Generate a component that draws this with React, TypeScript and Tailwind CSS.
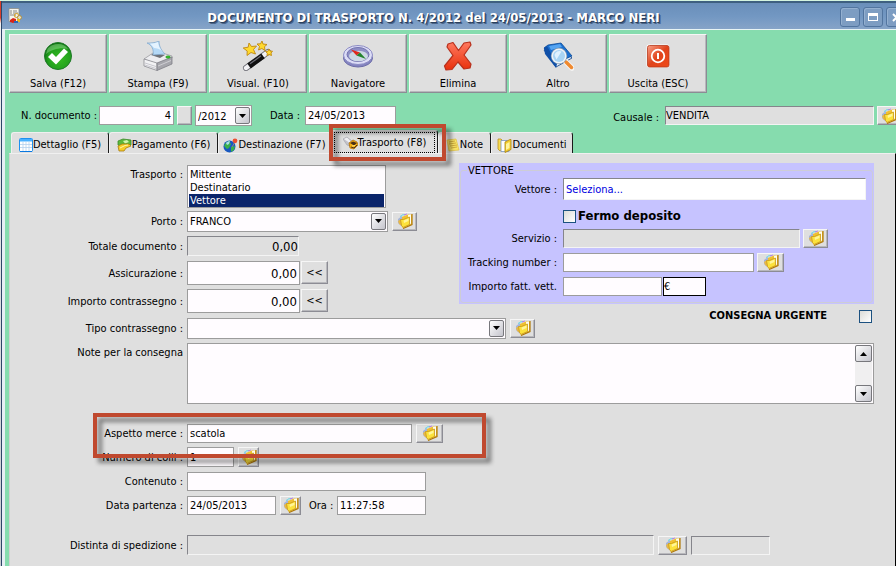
import React, { useId } from "react";

/* ---------- toolbar drawings ---------- */

function SaveIcon() {
  return (
    <svg width="30" height="30" viewBox="0 0 30 30" aria-hidden="true">
      <defs>
        <radialGradient id="saveG" cx="55%" cy="60%" r="60%">
          <stop offset="0" stopColor="#35bb22" />
          <stop offset="0.7" stopColor="#23a01e" />
          <stop offset="1" stopColor="#0b6a10" />
        </radialGradient>
      </defs>
      <circle cx="15" cy="15" r="13.500" fill="url(#saveG)" stroke="#1f7a28" />
      <path d="M3 13a12 11 0 0 1 22-5c-6-2-16 0-22 5z" fill="#8fdc8c" opacity=".5" />
      <path d="M5 16l4-4 4 4 8-8.500 4 3.500-12 12.500z" fill="#fff" />
    </svg>
  );
}

function PrintIcon() {
  return (
    <svg width="32" height="30" viewBox="0 0 32 30" aria-hidden="true">
      <path d="M2 18l9-6 6-1 13 4v2l-15 6z" fill="#ededf0" stroke="#9a9aa0" strokeWidth=".8" />
      <path d="M2 18l13 4v7.500L2 25z" fill="#f2f2f4" stroke="#8a8a90" strokeWidth=".8" />
      <path d="M30 16v7l-15 6.500V22z" fill="#a6a6ac" stroke="#7f7f86" strokeWidth=".8" />
      <path d="M3 22l11 3.500M3 24l11 3.500" stroke="#bcbcc4" strokeWidth=".8" />
      <path d="M16 25l13-5.500" stroke="#d8d8dc" strokeWidth=".8" />
      <path d="M9 14l3-2 11 2-5 3z" fill="#6e7076" />
      <path d="M5 2c4 0 8 0 12-2 0 6 3 10 6 13l-12 1c1-5-1-10-6-12z" fill="#b4d8f6" stroke="#7fa6cc" strokeWidth=".7" />
      <path d="M8 2.500c3 0 5-.5 8-1.500.500 4 2 7 4 9-2-2-6-3-8-3z" fill="#e4f3ff" />
      <ellipse cx="26" cy="16" rx="2.300" ry="1.200" fill="#35c42c" stroke="#2a8a24" strokeWidth=".5" />
    </svg>
  );
}

function WandIcon() {
  return (
    <svg width="32" height="30" viewBox="0 0 32 30" aria-hidden="true">
      <path d="M4 27L26 11" stroke="#6a6a72" strokeWidth="6" strokeLinecap="round" />
      <path d="M4 27L26 11" stroke="#f2f2f5" strokeWidth="4.400" strokeLinecap="round" />
      <path d="M7 25L21 14.800" stroke="#101010" strokeWidth="6" />
      <path d="M8 22.800L19 14.800" stroke="#70707a" strokeWidth="1.200" />
      <g fill="#ffd92e" stroke="#c08810" strokeWidth=".9" strokeLinejoin="round">
        <path d="M7 2l2.500 3.500 5-.5-3 3.500 2 4.500-4.500-1.500-4 3 .2-4.500-4-3 5-.8z" />
        <path d="M20 0l1 3 4 .5-2.500 2.200.5 3.800-3.200-2-3.300 1.500 1-3.500-2.500-2.500 3.500-.2z" />
        <path d="M27 8l1 2 2.500.200-1.500 1.800.5 2.500-2.500-1-2 1.200.3-2.500-1.800-1.700 2.500-.3z" />
      </g>
    </svg>
  );
}

function CompassIcon() {
  return (
    <svg width="32" height="30" viewBox="0 0 32 30" aria-hidden="true">
      <ellipse cx="16" cy="17" rx="14.500" ry="9" fill="#8484c0" stroke="#6c6ca8" />
      <ellipse cx="16" cy="14" rx="14.500" ry="9.500" fill="#dcdcf6" stroke="#8c8cc4" />
      <ellipse cx="16" cy="13.500" rx="11" ry="7" fill="#8f8fc6" stroke="#7474b0" />
      <ellipse cx="16.500" cy="15" rx="9.500" ry="5.200" fill="#ccd8e4" />
      <path d="M9 8.500l9 3-3.500 3z" fill="#e0281c" />
      <path d="M24 18l-9.500-3.500 3.500-3z" fill="#23822d" />
    </svg>
  );
}

function DeleteIcon() {
  return (
    <svg width="30" height="30" viewBox="0 0 30 30" aria-hidden="true">
      <defs>
        <linearGradient id="delG" x1="0" y1="0" x2="0" y2="1">
          <stop offset="0" stopColor="#ff7a60" />
          <stop offset="1" stopColor="#e8300c" />
        </linearGradient>
      </defs>
      <path
        d="M5 3l5-1.500 5.500 8L21 2l6-1 1 3-7 10 7 9-1 4-6 1-6-7-6 7.500-6 .5-1.500-4L10 14.500 4 6z"
        fill="url(#delG)"
        stroke="#b8301c"
        strokeWidth="1.200"
        strokeLinejoin="round"
      />
    </svg>
  );
}

function BookIcon() {
  return (
    <svg width="32" height="30" viewBox="0 0 32 30" aria-hidden="true">
      <path d="M2 9L16 4l14 13-16 9z" fill="#e4ecf6" stroke="#0b3f86" strokeWidth=".8" />
      <path d="M2 7l4-3 13-2 11 13-16 7z" fill="#1a6fd0" stroke="#0b4a96" strokeWidth=".8" />
      <path d="M2 7l3-2 10 18-1 4L3 13z" fill="#1050a8" />
      <path d="M7 5l11-2 2 3-11 3z" fill="#55a4f0" />
      <path d="M24 21l6 6" stroke="#f4f4f4" strokeWidth="5.500" strokeLinecap="round" />
      <path d="M24 21l5.500 5.500" stroke="#f08a30" strokeWidth="3.500" strokeLinecap="round" />
      <circle cx="17" cy="15" r="8.200" fill="#8098b0" />
      <circle cx="17" cy="15" r="7.500" fill="#eef3f8" />
      <circle cx="17" cy="15" r="6" fill="#a8d4f4" />
      <path d="M12.500 14a5 5 0 0 1 7-3.500l-5 8z" fill="#e0f2ff" />
    </svg>
  );
}

function ExitIcon() {
  return (
    <svg width="30" height="30" viewBox="0 0 30 30" aria-hidden="true">
      <defs>
        <linearGradient id="exitG" x1="0" y1="0" x2="1" y2="1">
          <stop offset="0" stopColor="#f8a088" />
          <stop offset=".5" stopColor="#e0441c" />
          <stop offset="1" stopColor="#f04a18" />
        </linearGradient>
      </defs>
      <rect x="3.500" y="3.500" width="23" height="23" rx="2.500" fill="#fff" />
      <rect x="4.500" y="4.500" width="21.500" height="21.500" rx="2" fill="url(#exitG)" stroke="#b83a1c" strokeWidth=".8" />
      <circle cx="15" cy="15" r="6.300" fill="none" stroke="#fff" strokeWidth="1.800" />
      <path d="M15 12v6" stroke="#fff" strokeWidth="2" />
    </svg>
  );
}

/* ---------- small drawings ---------- */

function FolderIcon() {
  return (
    <svg width="16" height="16" viewBox="0 0 16 16" aria-hidden="true">
      <path d="M1 6l4-3 2 9-3 1-3-3z" fill="#a4b4dc" />
      <path d="M1 8l3-2 1 7-3-2z" fill="#e8b848" />
      <path d="M3 3.500l2-1M5 2l3-.5" stroke="#60d8e8" strokeWidth="1" />
      <path d="M7 2l3-1" stroke="#c080e0" strokeWidth="1" />
      <path d="M5 4l6-2.500h4v9.500l-3 1.500-7 2z" fill="#f0c030" />
      <path d="M11 2l3-.5v9l-2 1z" fill="#fffdf0" />
      <path d="M15 1v10.500l-9 4" fill="none" stroke="#b07808" strokeWidth="1.200" />
      <path d="M3.500 6.500l3 0 6-2.500 0 7.500-6.500 3-1.500-2z" fill="#fce23c" stroke="#c89818" strokeWidth=".8" />
      <path d="M6.500 7.500l5-2v2.500l-4.500 2z" fill="#fff59a" />
    </svg>
  );
}

function AppIcon() {
  return (
    <svg width="15" height="16" viewBox="0 0 15 16" aria-hidden="true">
      <path d="M1 .5h10v13H1z" fill="#f4f4ee" stroke="#8d8d86" strokeWidth=".8" />
      <path d="M2 3h2M5 3h4M2 5h2M5 5h5M2 7h6" stroke="#7c7c7c" strokeWidth=".9" />
      <circle cx="8.500" cy="7.500" r="2" fill="none" stroke="#d8a838" strokeWidth="1.200" />
      <circle cx="11.500" cy="9.500" r="2" fill="#e8e0c8" stroke="#b09040" />
      <path d="M2 12l3-2 3 1v3l-3 1-3-1z" fill="#d82418" />
      <path d="M9 11h3v3H9z" fill="#e8b820" />
      <path d="M6 13h4v2H6z" fill="#2a68b8" />
    </svg>
  );
}

function TableIcon() {
  return (
    <svg width="14" height="14" viewBox="0 0 14 14" aria-hidden="true">
      <rect x=".5" y=".5" width="13" height="13" rx="1" fill="#fff" stroke="#1e90f0" />
      <path d="M1 1h12v2.500H1z" fill="#48b0ff" />
      <path d="M4 4v9M7 4v9M10 4v9M1 6.500h12M1 9.500h12" stroke="#b4d0ee" strokeWidth=".8" />
      <path d="M1 13.500h12" stroke="#0a78e0" />
    </svg>
  );
}

function MoneyIcon() {
  return (
    <svg width="15" height="14" viewBox="0 0 15 14" aria-hidden="true">
      <path d="M1 3l5-2 8 1v5l-9 2-4-2z" fill="#5cb83c" stroke="#3a8a28" strokeWidth=".8" />
      <path d="M6 3l4-1 2 2-4 1.500z" fill="#d0f4b0" />
      <path d="M1 8l4-2 7 0 2 2-5 2-2 3-5 0z" fill="#f6cc28" stroke="#a87c10" strokeWidth=".8" />
      <path d="M3 10l5-2.500 3-.5" stroke="#fff6a8" fill="none" />
    </svg>
  );
}

function GlobeIcon() {
  return (
    <svg width="15" height="15" viewBox="0 0 15 15" aria-hidden="true">
      <circle cx="6.500" cy="8.500" r="6" fill="#1858c0" />
      <path d="M1 8c1-3 3-4 5-5l2 3-2 4-2 1zM8 9l4-1-1 4-3 2z" fill="#3ab04a" />
      <path d="M3 5c1-1 2-2 4-2l-1 3-2 1z" fill="#a8e0e8" />
      <path d="M12 4l-3 5" stroke="#888" strokeWidth="1" />
      <circle cx="12" cy="2.800" r="2.400" fill="#ec5030" />
    </svg>
  );
}

function TruckIcon() {
  return (
    <svg width="15" height="14" viewBox="0 0 15 14" aria-hidden="true">
      <path d="M0 3l4-2 5 4-2 5-3-1z" fill="#c4c4cc" stroke="#a0a0a8" strokeWidth=".6" />
      <path d="M1 3l3-1.500 4 4-2 1z" fill="#f0f0f4" />
      <path d="M6 7l4-3 4 2 1 3-4 4-4-1z" fill="#f8b010" stroke="#a86400" strokeWidth=".7" />
      <path d="M7 7l3-1.500 4 1.500-3 2.500z" fill="#4a3018" />
      <path d="M8 11l3 1 3-3" stroke="#4a3018" fill="none" />
      <path d="M9 10l3-.5" stroke="#ffe070" />
    </svg>
  );
}

function NoteIcon() {
  return (
    <svg width="14" height="14" viewBox="0 0 14 14" aria-hidden="true">
      <path d="M1 2l9-1 3 11-10 1z" fill="#f8e468" stroke="#e0c040" strokeWidth=".7" />
      <path d="M3 4l6-1M3 6l7-1M4 8l7-1M5 10l6-1" stroke="#c8a030" strokeWidth=".8" />
    </svg>
  );
}

function DocsIcon() {
  return (
    <svg width="15" height="15" viewBox="0 0 15 15" aria-hidden="true">
      <path d="M1 1h3l1 1v10l-2 1-2-2z" fill="#f8dc50" stroke="#b89020" strokeWidth=".8" />
      <path d="M4 2.500h6l2 2v9H4z" fill="#fff" stroke="#7a96c0" strokeWidth=".8" />
      <path d="M8 4l5-2.500 1 0v10l-6 3z" fill="#f4d030" stroke="#a88010" strokeWidth=".8" />
      <path d="M9 6l3.500-2v6l-3.500 2z" fill="#fff4a0" />
    </svg>
  );
}

/* ---------- shared controls ---------- */

const raised =
  "border border-t-[#f6f6f6] border-l-[#f6f6f6] border-r-[#8c8c94] border-b-[#8c8c94] bg-[#dfdfdf] shadow-[inset_-1px_-1px_0_#b8b8bc]";
const flat = "border border-[#9c9c9c] bg-[#fffcff] px-0.5 text-black outline-none";
const sunken =
  "border border-t-[#85858b] border-l-[#85858b] border-r-[#f4f4f4] border-b-[#f4f4f4] outline-none";
const arrowBox =
  "pointer-events-none flex items-center justify-center rounded-[2px] border border-[#77777c] bg-linear-to-br from-white to-[#c4c4cc]";

function FolderButton({ size, label }: { size: string; label: string }) {
  return (
    <button type="button" aria-label={label} className={`${raised} ${size} flex shrink-0 items-center justify-center`}>
      <FolderIcon />
    </button>
  );
}

function Arrow({ up = false }: { up?: boolean }) {
  return (
    <svg width="7" height="4" viewBox="0 0 7 4" aria-hidden="true">
      <path d={up ? "M0 4L3.500 0 7 4z" : "M0 0L3.500 4 7 0z"} fill="#000" />
    </svg>
  );
}

function DropDown({ id, value, size, label }: { id: string; value: string; size: string; label?: string }) {
  return (
    <div className={`relative shrink-0 ${size}`}>
      <select id={id} aria-label={label} className={`${flat} block h-full w-full appearance-none pt-0.5`} defaultValue={value}>
        <option>{value}</option>
      </select>
      <span className={`${arrowBox} absolute top-0.5 right-0.5 bottom-0.5 w-[15px]`}>
        <Arrow />
      </span>
    </div>
  );
}

function Row({
  label,
  height,
  top = false,
  className = "",
  children,
}: {
  label: string;
  height: string;
  top?: boolean;
  className?: string;
  children: (id: string) => React.ReactNode;
}) {
  const id = useId();
  return (
    <div className={`flex gap-1 ${height} ${top ? "items-start" : "items-center"} ${className}`}>
      <label htmlFor={id} className="w-[173px] shrink-0 pt-0.5 text-right leading-4 whitespace-nowrap">
        {label}
      </label>
      {children(id)}
    </div>
  );
}

function CarrierRow({
  label,
  height = "h-5",
  children,
}: {
  label: string;
  height?: string;
  children: (id: string) => React.ReactNode;
}) {
  const id = useId();
  return (
    <div className={`flex items-center ${height}`}>
      <label htmlFor={id} className="mr-1.5 w-24 shrink-0 pt-0.5 text-right whitespace-nowrap">
        {label}
      </label>
      {children(id)}
    </div>
  );
}

const checkBox =
  "size-[13px] shrink-0 appearance-none border border-[#1c5180] bg-linear-to-br from-[#dcdcd7] to-white";

const frame =
  "pointer-events-none absolute border-4 border-[#c0492f] drop-shadow-[5px_5px_2px_rgba(0,0,0,0.45)]";

const tools = [
  { text: "Salva (F12)", icon: <SaveIcon /> },
  { text: "Stampa (F9)", icon: <PrintIcon /> },
  { text: "Visual. (F10)", icon: <WandIcon /> },
  { text: "Navigatore", icon: <CompassIcon /> },
  { text: "Elimina", icon: <DeleteIcon /> },
  { text: "Altro", icon: <BookIcon /> },
  { text: "Uscita (ESC)", icon: <ExitIcon /> },
];

const tabs = [
  { text: "Dettaglio (F5)", icon: <TableIcon />, width: "w-[98px]" },
  { text: "Pagamento (F6)", icon: <MoneyIcon />, width: "w-[109px]" },
  { text: "Destinazione (F7)", icon: <GlobeIcon />, width: "w-[113px]" },
  { text: "Trasporto (F8)", icon: <TruckIcon />, width: "w-[107px]", active: true },
  { text: "Note", icon: <NoteIcon />, width: "w-[53px]" },
  { text: "Documenti", icon: <DocsIcon />, width: "w-[82px]" },
];

const winButton =
  "flex size-5 shrink-0 items-center justify-center rounded-[3px] border border-[#52759f] bg-[#7d9dc2] shadow-[inset_1px_1px_0_#94b0d0]";

export default function App() {
  return (
    <div className="flex min-h-screen overflow-hidden border-t border-[#d4f4e0] bg-[#f4f7f2] font-['DejaVu_Sans_Condensed','DejaVu_Sans',sans-serif] text-[11px] leading-4 text-black">
      <div className="w-px shrink-0 bg-linear-to-b from-[#d8402c] from-3% via-[#f0f0f0] via-4% to-[#c8ccd0]" />
      <div className="flex min-w-0 flex-1 flex-col border-l border-[#2c4668] bg-[#86dcae]">
        <header className="flex h-[29px] shrink-0 items-center border-t-2 border-b border-t-[#3e6080] border-b-[#e8f4f4] bg-linear-to-b from-[#6a8fba] via-[#7297c2] to-[#86a4c8] pl-1.5">
          <AppIcon />
          <h1 className="min-w-0 flex-1 truncate pt-1 pl-1 text-center text-[13px] font-bold text-white [text-shadow:1px_1px_0_#2a3f5c,2px_2px_0_#4a6488]">
            DOCUMENTO DI TRASPORTO N. 4/2012 del 24/05/2013 - MARCO NERI
          </h1>
          <div className="-mr-2.5 flex gap-[3px] pt-0.5">
            <button type="button" aria-label="Riduci" className={winButton}>
              <span className="mt-1 h-[3px] w-[9px] bg-white" />
            </button>
            <button type="button" aria-label="Ingrandisci" className={winButton}>
              <span className="h-2 w-[10px] border border-t-[3px] border-white" />
            </button>
            <button type="button" aria-label="Chiudi" className={winButton}>
              <svg width="9" height="9" viewBox="0 0 9 9" aria-hidden="true">
                <path d="M1 1l7 7M8 1L1 8" stroke="#fff" strokeWidth="2" />
              </svg>
            </button>
          </div>
        </header>

        <div className="flex flex-1 flex-col border-l-[3px] border-[#e6eef4] pl-1">
          <div className="flex gap-0.5 pt-1">
            {tools.map((t) => (
              <button
                key={t.text}
                type="button"
                className={`${raised} flex h-[59px] w-[98px] flex-col items-center justify-between pt-1.5`}
              >
                {t.icon}
                <span>{t.text}</span>
              </button>
            ))}
          </div>

          <div className="mt-3 flex h-[21px] items-center pl-3">
            <label htmlFor="num" className="w-[78px] shrink-0 whitespace-nowrap">
              N. documento :
            </label>
            <input id="num" defaultValue="4" className={`${flat} h-[19px] w-[75px] text-right`} />
            <button type="button" aria-label="Numero" className={`${raised} mx-[3px] h-[19px] w-[15px]`} />
            <DropDown id="year" label="Anno" value="/2012" size="h-[21px] w-[57px]" />
            <label htmlFor="date" className="ml-[18px] w-[35px] shrink-0">
              Data :
            </label>
            <input id="date" defaultValue="24/05/2013" className={`${flat} h-[19px] w-[91px]`} />
            <label htmlFor="cause" className="mr-1.5 ml-auto pt-1">
              Causale :
            </label>
            <input id="cause" readOnly defaultValue="VENDITA" className={`${sunken} h-[19px] w-[209px] bg-[#dfdfdf]`} />
            <div className="-mr-1 ml-[3px] flex">
              <FolderButton size="h-[19px] w-[23px]" label="Scegli causale" />
            </div>
          </div>

          <div role="tablist" className="mt-1.5 flex h-[21px] items-end pl-0.5">
            {tabs.map((t) => (
              <div key={t.text} className={`relative ${t.width}`}>
                <button
                  type="button"
                  role="tab"
                  aria-selected={!!t.active}
                  className={`flex w-full items-center justify-center rounded-t-[3px] border-t border-r border-l border-t-[#f0f0f0] border-r-[#1a1a1a] border-l-[#f0f0f0] bg-[#dfdfdf] whitespace-nowrap ${t.active ? "h-[23px]" : "h-[21px] pt-1"}`}
                >
                  <span
                    className={`flex items-center ${t.active ? "h-[21px] w-[101px] justify-center border border-dotted border-black pt-0.5" : ""}`}
                  >
                    {t.icon}
                    {t.text}
                  </span>
                </button>
                {t.active && <span className={`${frame} -top-1.5 -right-2 -bottom-2 -left-0.5 z-10`} />}
              </div>
            ))}
          </div>

          <main className="flex flex-1 flex-col gap-1 border-t border-r border-l border-t-[#f0f0f0] border-r-black border-l-[#cfcfcf] bg-[#dfdfdf] pt-[9px] pr-[21px] pb-2">
            <div className="flex">
              <div className="flex w-[449px] shrink-0 flex-col gap-1 pt-0.5">
                <Row label="Trasporto :" height="h-[42px]" top>
                  {(id) => (
                    <select
                      id={id}
                      size={3}
                      defaultValue="Vettore"
                      className="h-[43px] w-[199px] overflow-hidden border border-[#9c9c9c] bg-[#fffcff] p-px pt-0.5 outline-none"
                    >
                      {["Mittente", "Destinatario", "Vettore"].map((o) => (
                        <option
                          key={o}
                          className="h-[13px] min-h-0 p-0 pl-px leading-[13px] checked:bg-[#0a246a] checked:bg-linear-to-r checked:from-[#0a246a] checked:to-[#0a246a] checked:text-white"
                        >
                          {o}
                        </option>
                      ))}
                    </select>
                  )}
                </Row>
                <Row label="Porto :" height="h-5">
                  {(id) => (
                    <>
                      <DropDown id={id} value="FRANCO" size="h-[21px] w-[201px]" />
                      <FolderButton size="h-[19px] w-[25px]" label="Scegli porto" />
                    </>
                  )}
                </Row>
                <Row label="Totale documento :" height="h-[22px]">
                  {(id) => (
                    <input
                      id={id}
                      readOnly
                      defaultValue="0,00"
                      className={`${sunken} h-5 w-[112px] bg-[#dfdfdf] text-right text-[13px]`}
                    />
                  )}
                </Row>
                <Row label="Assicurazione :" height="h-6">
                  {(id) => (
                    <div className="flex gap-px">
                      <input id={id} defaultValue="0,00" className={`${flat} h-6 w-[113px] text-right text-[13px]`} />
                      <button type="button" className={`${raised} h-[23px] w-[27px]`}>
                        &lt;&lt;
                      </button>
                    </div>
                  )}
                </Row>
                <Row label="Importo contrassegno :" height="h-6">
                  {(id) => (
                    <div className="flex gap-px">
                      <input id={id} defaultValue="0,00" className={`${flat} h-6 w-[113px] text-right text-[13px]`} />
                      <button type="button" className={`${raised} h-[23px] w-[27px]`}>
                        &lt;&lt;
                      </button>
                    </div>
                  )}
                </Row>
                <Row label="Tipo contrassegno :" height="h-[22px]">
                  {(id) => (
                    <>
                      <DropDown id={id} value="" size="h-[21px] w-[319px]" />
                      <FolderButton size="h-[19px] w-[25px]" label="Scegli contrassegno" />
                    </>
                  )}
                </Row>
              </div>

              <div className="flex min-w-0 flex-1 flex-col">
                <section className="bg-[#c6c3ff] px-px pb-px">
                  <fieldset className="flex flex-col gap-1 rounded-[3px] border border-[#cdcdd6] pb-1.5">
                    <legend className="ml-1.5 px-px leading-[15px]">VETTORE</legend>
                    <CarrierRow label="Vettore :" height="h-[22px]">
                      {(id) => (
                        <input
                          id={id}
                          defaultValue="Seleziona..."
                          className={`${sunken} mr-1.5 h-[22px] min-w-0 flex-1 bg-white px-0.5 text-[#0000e0]`}
                        />
                      )}
                    </CarrierRow>
                    <label className="flex h-5 items-center gap-0.5 pt-1 pl-[102px] text-[13px] font-bold">
                      <input type="checkbox" className={checkBox} />
                      Fermo deposito
                    </label>
                    <CarrierRow label="Servizio :">
                      {(id) => (
                        <>
                          <input id={id} readOnly className={`${sunken} mr-[3px] h-[19px] w-[237px] bg-[#dfdfdf]`} />
                          <FolderButton size="h-[19px] w-[25px]" label="Scegli servizio" />
                        </>
                      )}
                    </CarrierRow>
                    <CarrierRow label="Tracking number :">
                      {(id) => (
                        <>
                          <input id={id} className={`${flat} mr-[3px] h-[19px] w-[191px]`} />
                          <FolderButton size="h-[19px] w-[27px]" label="Apri tracking" />
                        </>
                      )}
                    </CarrierRow>
                    <CarrierRow label="Importo fatt. vett.">
                      {(id) => (
                        <>
                          <input id={id} className={`${flat} mr-px h-[19px] w-[99px]`} />
                          <input
                            aria-label="Valuta"
                            defaultValue="€"
                            className="h-[19px] w-[43px] border border-black bg-[#fffcff] outline-none"
                          />
                        </>
                      )}
                    </CarrierRow>
                  </fieldset>
                </section>
                <label className="mt-1 flex items-center justify-end gap-8 pr-0.5 font-bold">
                  CONSEGNA URGENTE
                  <input type="checkbox" className={checkBox} />
                </label>
              </div>
            </div>

            <Row label="Note per la consegna" height="h-[61px]" top>
              {(id) => (
                <div className="flex h-full min-w-0 flex-1 border border-[#9c9c9c] bg-[#fffcff] p-px">
                  <textarea id={id} className="min-w-0 flex-1 resize-none outline-none" />
                  <div className="flex w-[17px] flex-col justify-between bg-[#f0eff0]">
                    <span className={`${arrowBox} h-[17px]`}>
                      <Arrow up />
                    </span>
                    <span className={`${arrowBox} h-[17px]`}>
                      <Arrow />
                    </span>
                  </div>
                </div>
              )}
            </Row>

            <Row label="Aspetto merce :" height="h-5" className="relative mt-[15px]">
              {(id) => (
                <>
                  <input id={id} defaultValue="scatola" className={`${flat} h-[19px] w-[225px]`} />
                  <FolderButton size="h-[19px] w-[27px]" label="Scegli aspetto" />
                  <span className={`${frame} -top-2.5 left-[83px] z-10 h-[45px] w-[393px]`} />
                </>
              )}
            </Row>
            <Row label="Numero di colli :" height="h-5">
              {(id) => (
                <>
                  <input id={id} defaultValue="1" className={`${flat} h-5 w-[47px]`} />
                  <FolderButton size="h-5 w-[21px]" label="Scegli colli" />
                </>
              )}
            </Row>
            <Row label="Contenuto :" height="h-5">
              {(id) => <input id={id} className={`${flat} h-[19px] w-[239px]`} />}
            </Row>
            <Row label="Data partenza :" height="h-5">
              {(id) => (
                <>
                  <input id={id} defaultValue="24/05/2013" className={`${flat} h-[19px] w-[89px]`} />
                  <FolderButton size="h-[19px] w-[21px]" label="Scegli data" />
                  <label htmlFor="hour" className="ml-1 w-6 pt-0.5 whitespace-nowrap">
                    Ora :
                  </label>
                  <input id="hour" defaultValue="11:27:58" className={`${flat} h-[19px] w-[89px]`} />
                </>
              )}
            </Row>
            <Row label="Distinta di spedizione :" height="h-5" className="mt-4">
              {(id) => (
                <>
                  <input id={id} readOnly className={`${sunken} h-5 w-[467px] bg-[#dfdfdf]`} />
                  <FolderButton size="h-[19px] w-[29px]" label="Scegli distinta" />
                  <input aria-label="Numero distinta" readOnly className={`${sunken} h-[19px] w-[79px] bg-[#dfdfdf]`} />
                </>
              )}
            </Row>
          </main>
        </div>
      </div>
    </div>
  );
}
